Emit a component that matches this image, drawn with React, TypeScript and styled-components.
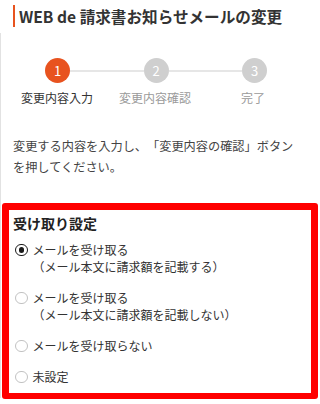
import { Fragment } from "react";
import styled, { createGlobalStyle } from "styled-components";

const GlobalStyle = createGlobalStyle`
  html, body {
    margin: 0;
    padding: 0;
    background: #fff;
  }
  body {
    font-family: "Noto Sans CJK JP", "Noto Sans", sans-serif;
    color: #333;
    text-spacing-trim: space-all;
  }
`;

const ORANGE = "#e8531f";

const Page = styled.div`
  width: 320px;
  height: 404px;
  overflow: hidden;
`;

const Header = styled.header`
  padding: 5px 0 6px 13px;
`;

const Title = styled.h1`
  margin: 0;
  height: 22px;
  line-height: 22px;
  border-left: 2px solid ${ORANGE};
  padding-left: 4px;
  font-size: 15.6px;
  font-weight: bold;
  color: #333;
`;

const Content = styled.main`
  border-left: 1px solid #e2e2e2;
  height: 365px;
`;

const Track = styled.div`
  display: flex;
  align-items: center;
  padding: 25px 0 0 44px;
  width: 222px;
`;

const Circle = styled.span<{ $active?: boolean }>`
  flex: none;
  width: 25px;
  height: 25px;
  border-radius: 50%;
  background: ${(p) => (p.$active ? ORANGE : "#cfcfcf")};
  color: #fff;
  font-size: 13px;
  line-height: 25px;
  text-align: center;
`;

const Line = styled.span`
  flex: 1;
  height: 2px;
  background: #e6e6e6;
`;

const Labels = styled.div`
  display: grid;
  grid-template-columns: repeat(3, 98px);
  padding-left: 7px;
  margin-top: 7px;
`;

const StepLabel = styled.span<{ $active?: boolean }>`
  text-align: center;
  font-size: 12px;
  line-height: 16px;
  color: ${(p) => (p.$active ? "#333" : "#9a9a9a")};
`;

const Lead = styled.p`
  margin: 30px 0 0 12px;
  font-size: 12.2px;
  line-height: 21px;
  color: #444;
`;

const Highlight = styled.section`
  margin: 25px 0 0 1px;
  width: 298px;
  border: 7px solid #ff0000;
  border-bottom-width: 6px;
  border-radius: 3px;
  padding: 3px 0 8px 4px;
`;

const GroupTitle = styled.h2`
  margin: 0;
  font-size: 14px;
  line-height: 20px;
  font-weight: bold;
  color: #222;
`;

const Options = styled.div`
  display: flex;
  flex-direction: column;
  gap: 14px;
  margin-top: 8px;
`;

const Option = styled.label`
  display: flex;
  align-items: flex-start;
  gap: 5px;
  font-size: 12px;
  line-height: 17px;
  color: #333;
`;

const Radio = styled.input.attrs({ type: "radio" })`
  appearance: none;
  flex: none;
  margin: 2.5px 0 0 2px;
  width: 12.5px;
  height: 12.5px;
  border-radius: 50%;
  border: 1px solid #c2c2c2;
  background: #fff;
  box-sizing: border-box;
  display: grid;
  place-items: center;

  &:checked {
    border: 1.6px solid #1a1a1a;
  }
  &:checked::after {
    content: "";
    width: 5.5px;
    height: 5.5px;
    border-radius: 50%;
    background: #1a1a1a;
  }
`;

const OptionText = styled.span`
  display: block;
`;

const steps = [
  { n: 1, label: "変更内容入力" },
  { n: 2, label: "変更内容確認" },
  { n: 3, label: "完了" },
];

const options = [
  ["メールを受け取る", "（メール本文に請求額を記載する）"],
  ["メールを受け取る", "（メール本文に請求額を記載しない）"],
  ["メールを受け取らない"],
  ["未設定"],
];

export default function App() {
  return (
    <Page>
      <GlobalStyle />
      <Header>
        <Title>WEB de 請求書お知らせメールの変更</Title>
      </Header>
      <Content>
        <Track>
          {steps.map((s, i) => (
            <Fragment key={s.n}>
              {i > 0 && <Line />}
              <Circle $active={i === 0}>{s.n}</Circle>
            </Fragment>
          ))}
        </Track>
        <Labels>
          {steps.map((s, i) => (
            <StepLabel key={s.n} $active={i === 0}>
              {s.label}
            </StepLabel>
          ))}
        </Labels>

        <Lead>
          変更する内容を入力し、「変更内容の確認」ボタン
          <br />
          を押してください。
        </Lead>

        <Highlight>
          <GroupTitle>受け取り設定</GroupTitle>
          <Options>
            {options.map((lines, i) => (
              <Option key={i}>
                <Radio name="receive" defaultChecked={i === 0} />
                <OptionText>
                  {lines.map((l) => (
                    <OptionText key={l}>{l}</OptionText>
                  ))}
                </OptionText>
              </Option>
            ))}
          </Options>
        </Highlight>
      </Content>
    </Page>
  );
}
